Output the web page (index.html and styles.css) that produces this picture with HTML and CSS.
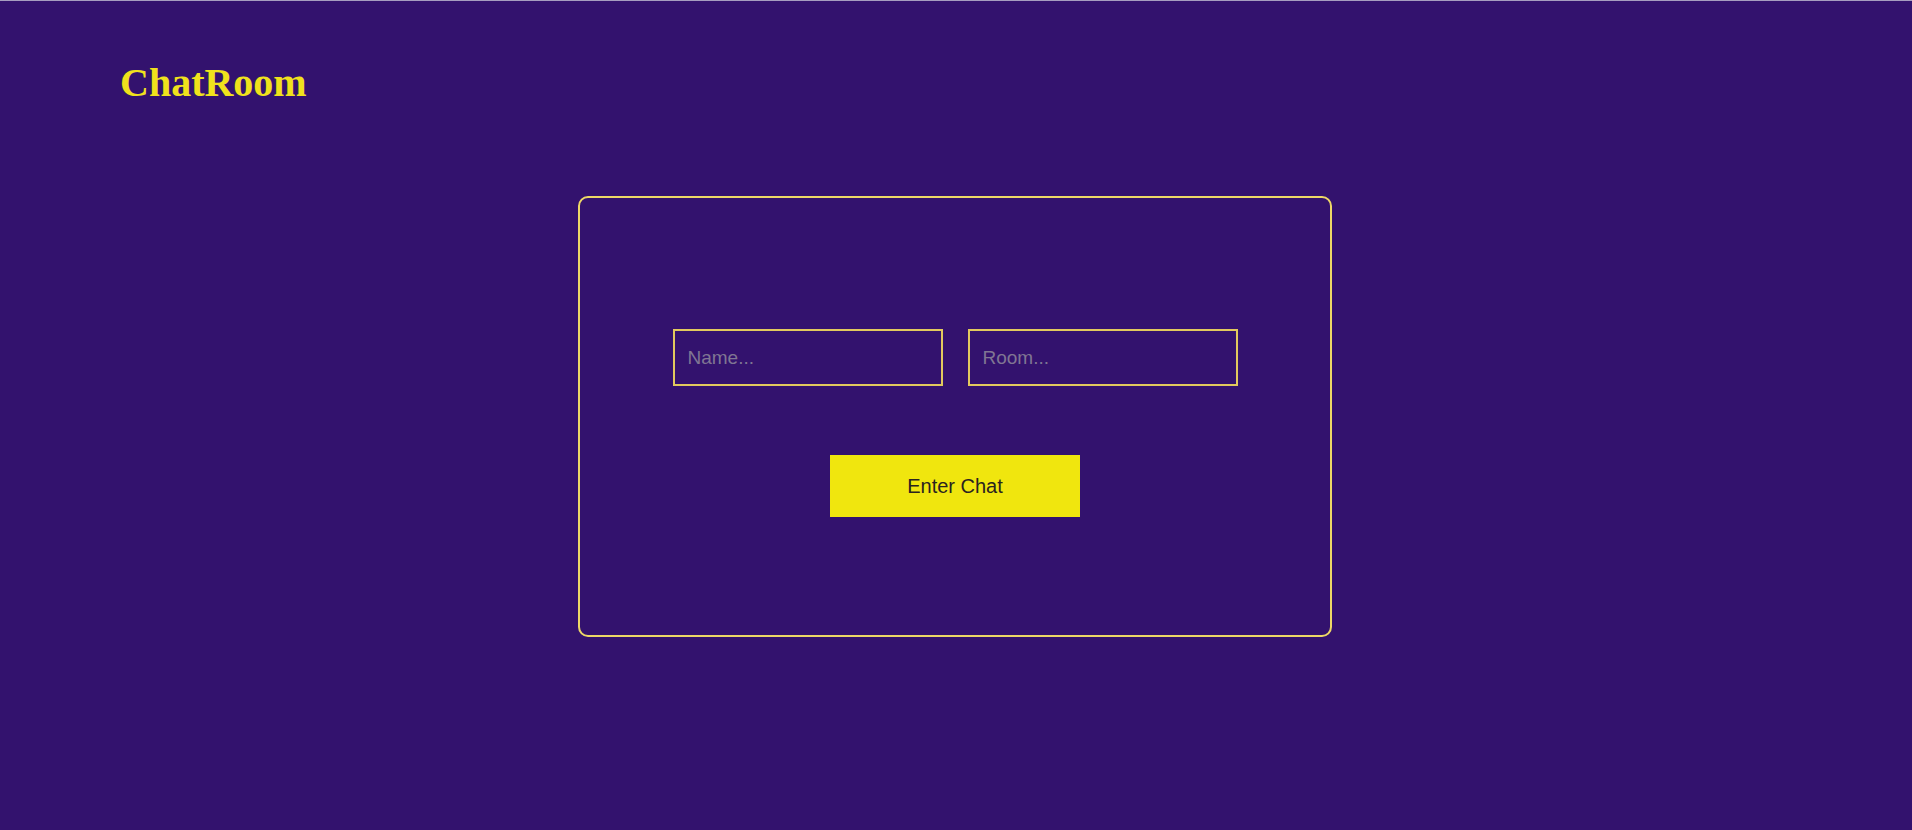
FILE: index.html
```html
<!DOCTYPE html>
<html lang="en">
<head>
<meta charset="utf-8">
<title>ChatRoom</title>
<link rel="stylesheet" href="styles.css">
</head>
<body>
  <div class="page">
    <header class="header">
      <h1 class="logo">ChatRoom</h1>
    </header>
    <main class="main">
      <form class="card">
        <div class="fields">
          <input class="field" type="text" placeholder="Name...">
          <input class="field" type="text" placeholder="Room...">
        </div>
        <button class="enter" type="button">Enter Chat</button>
      </form>
    </main>
  </div>
</body>
</html>
```

FILE: styles.css
```css
html, body {
  margin: 0;
  padding: 0;
  height: 100%;
}

body {
  background: #33126e;
  font-family: "Liberation Sans", Arial, sans-serif;
}

.page {
  min-height: 100%;
  border-top: 1px solid #a79ec0;
  box-sizing: border-box;
}

.header {
  padding: 59px 0 0 120px;
}

.logo {
  margin: 0;
  font-family: "Liberation Serif", "Times New Roman", serif;
  font-weight: bold;
  font-size: 40px;
  line-height: 46px;
  color: #f0e21c;
}

.main {
  display: flex;
  justify-content: center;
  padding-top: 90px;
  padding-right: 2px;
}

.card {
  width: 754px;
  height: 441px;
  box-sizing: border-box;
  border: 2px solid #eed866;
  border-radius: 10px;
  display: flex;
  flex-direction: column;
  align-items: center;
  padding-top: 131px;
  gap: 69px;
}

.fields {
  display: flex;
  gap: 25px;
}

.field {
  width: 270px;
  height: 57px;
  box-sizing: border-box;
  background: transparent;
  border: 2px solid #e2c95e;
  border-radius: 0;
  padding: 0 13px;
  font-family: "Liberation Sans", Arial, sans-serif;
  font-size: 19px;
  color: #ffffff;
  outline: none;
}

.field::placeholder {
  color: #807693;
}

.enter {
  width: 250px;
  height: 62px;
  border: none;
  border-radius: 0;
  background: #f0e60e;
  color: #2a2320;
  font-family: "Liberation Sans", Arial, sans-serif;
  font-size: 20px;
  cursor: pointer;
}
```
